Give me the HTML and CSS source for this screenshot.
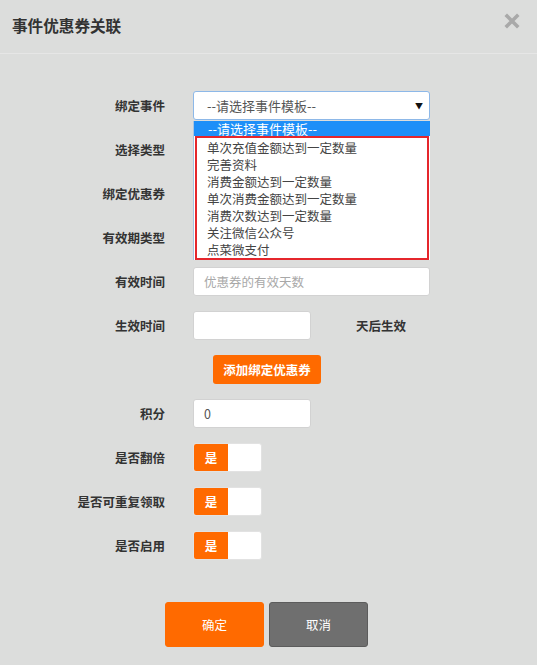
FILE: index.html
```html
<!DOCTYPE html>
<html lang="zh">
<head>
<meta charset="utf-8">
<title>事件优惠券关联</title>
<link rel="stylesheet" href="styles.css">
</head>
<body>
<div class="panel">
  <div class="header">
    <h1 class="title">事件优惠券关联</h1>
    <span class="close" aria-label="关闭">
      <svg width="16" height="16" viewBox="0 0 16 16"><path d="M3 3 L13 13 M13 3 L3 13" stroke="#a9a9a9" stroke-width="3.6" stroke-linecap="square"/></svg>
    </span>
  </div>
  <div class="form">
    <div class="row">
      <label class="lbl">绑定事件</label>
      <div class="select wide">
        <span>--请选择事件模板--</span>
        <span class="arrow">▼</span>
      </div>
      <div class="dropdown">
        <div class="opt active">--请选择事件模板--</div>
        <div class="mark">
          <div class="opt">单次充值金额达到一定数量</div>
          <div class="opt">完善资料</div>
          <div class="opt">消费金额达到一定数量</div>
          <div class="opt">单次消费金额达到一定数量</div>
          <div class="opt">消费次数达到一定数量</div>
          <div class="opt">关注微信公众号</div>
          <div class="opt">点菜微支付</div>
        </div>
      </div>
    </div>
    <div class="row"><label class="lbl">选择类型</label><div class="input wide"></div></div>
    <div class="row"><label class="lbl">绑定优惠券</label><div class="input wide"></div></div>
    <div class="row"><label class="lbl">有效期类型</label><div class="input wide"></div></div>
    <div class="row"><label class="lbl">有效时间</label><div class="input wide placeholder">优惠券的有效天数</div></div>
    <div class="row"><label class="lbl">生效时间</label><div class="input short"></div><span class="suffix">天后生效</span></div>
    <div class="row"><span class="lbl"></span><button class="add-btn">添加绑定优惠券</button></div>
    <div class="row"><label class="lbl">积分</label><div class="input short">0</div></div>
    <div class="row"><label class="lbl">是否翻倍</label><div class="toggle"><span class="on">是</span><span class="off"></span></div></div>
    <div class="row"><label class="lbl">是否可重复领取</label><div class="toggle"><span class="on">是</span><span class="off"></span></div></div>
    <div class="row"><label class="lbl">是否启用</label><div class="toggle"><span class="on">是</span><span class="off"></span></div></div>
  </div>
  <div class="actions">
    <button class="btn ok">确定</button>
    <button class="btn cancel">取消</button>
  </div>
</div>
</body>
</html>
```
FILE: styles.css
```css
* { box-sizing: border-box; }
html, body { margin: 0; padding: 0; background: #ffffff; }
body {
  font-family: "Noto Sans CJK SC", "Noto Sans", sans-serif;
  color: #333;
}
.panel {
  width: 537px;
  height: 665px;
  background: #dcdddc;
  position: relative;
}
.header {
  height: 54px;
  border-bottom: 1px solid #e6e6e6;
  display: flex;
  align-items: center;
  justify-content: space-between;
  padding: 0 17px 4px 12px;
}
.title {
  margin: 0;
  font-size: 15.6px;
  font-weight: bold;
  color: #333;
  line-height: 20px;
}
.close { display: flex; margin-top: -8px; }
.form {
  padding-top: 37px;
  display: flex;
  flex-direction: column;
  gap: 15px;
  position: relative;
}
.row {
  display: flex;
  align-items: center;
  height: 29px;
  position: relative;
}
.lbl {
  width: 165px;
  text-align: right;
  margin-right: 28px;
  font-size: 12.5px;
  font-weight: bold;
  color: #333;
  flex: none;
}
.input, .select {
  height: 29px;
  background: #fff;
  border: 1px solid #d2d2d2;
  border-radius: 3px;
  font-size: 12.5px;
  color: #555;
  display: flex;
  align-items: center;
  padding: 0 10px;
}
.wide { width: 237px; }
.short { width: 118px; }
.placeholder { color: #a8a8a8; }
.select {
  border-color: #8db8e8;
  justify-content: space-between;
  padding: 0 6px 0 13px;
  font-size: 13px;
}
.arrow { font-size: 8px; color: #111; }
.suffix {
  margin-left: 45px;
  font-size: 12.5px;
  font-weight: bold;
  color: #333;
}
.dropdown {
  position: absolute;
  left: 193px;
  top: 30px;
  width: 237px;
  background: #fff;
  border-left: 1px solid #a9c4e2;
  z-index: 5;
  font-size: 12.5px;
  color: #444;
}
.opt {
  height: 17px;
  line-height: 17px;
  padding-left: 10px;
  white-space: nowrap;
}
.dropdown > .opt.active {
  height: 15px;
  line-height: 15px;
  background: #1e8ff8;
  color: #fff;
  padding-left: 14px;
  font-size: 13px;
}
.mark {
  margin: 0 1px;
  border: 2px solid #e5262c;
  padding-top: 1px;
}
.add-btn {
  margin-left: 20px;
  width: 108px;
  height: 29px;
  background: #ff6a00;
  color: #fff;
  border: none;
  border-radius: 3px;
  font-family: inherit;
  font-size: 12.5px;
  font-weight: bold;
  padding: 0;
}
.toggle {
  width: 69px;
  height: 29px;
  display: flex;
  border-radius: 3px;
  overflow: hidden;
  border: 1px solid #e2e2e2;
  background: #fff;
}
.toggle .on {
  width: 34px;
  background: #ff6a00;
  color: #fff;
  font-weight: bold;
  font-size: 12.5px;
  display: flex;
  align-items: center;
  justify-content: center;
}
.toggle .off { flex: 1; }
.actions {
  display: flex;
  justify-content: center;
  gap: 5px;
  margin-top: 42px;
  padding-right: 4px;
}
.btn {
  width: 99px;
  height: 45px;
  border-radius: 3px;
  font-family: inherit;
  font-size: 12.5px;
  color: #fff;
  padding: 0;
}
.ok { background: #ff6a00; border: 1px solid #ff6a00; }
.cancel { background: #6f6f6f; border: 1px solid #5c5c5c; }
```
